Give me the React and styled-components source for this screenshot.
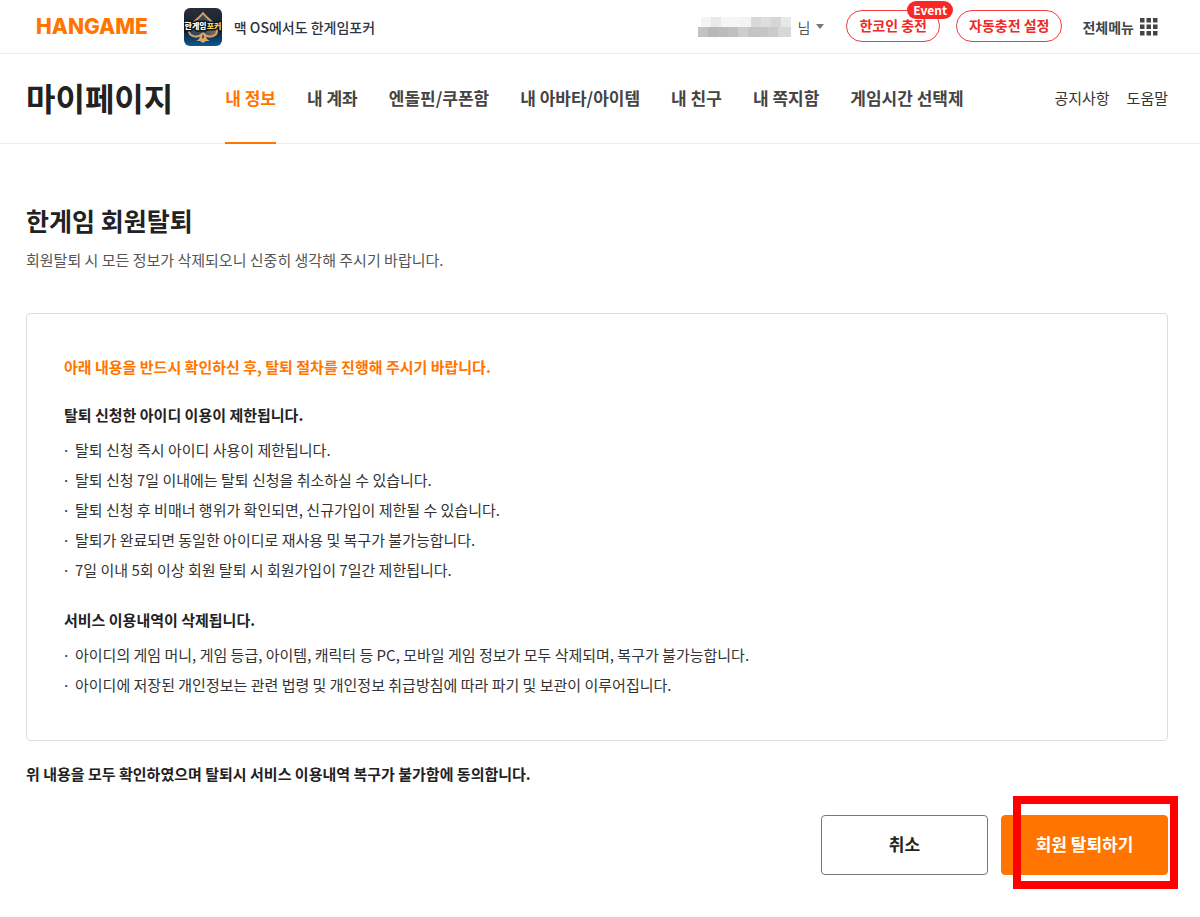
import React from "react";
import styled, { createGlobalStyle } from "styled-components";

const GlobalStyle = createGlobalStyle`
  * {
    box-sizing: border-box;
  }
  body {
    margin: 0;
    background: #fff;
    color: #222;
    font-family: "Noto Sans CJK KR", "Noto Sans", sans-serif;
    font-size: 15px;
  }
  h1, h2, h3, p, ul {
    margin: 0;
    padding: 0;
  }
  a {
    color: inherit;
    text-decoration: none;
  }
  button {
    font-family: inherit;
    cursor: pointer;
  }
`;

const TopBar = styled.header`
  display: flex;
  align-items: center;
  height: 54px;
  padding: 0 42px 0 36px;
  border-bottom: 1px solid #ececec;
`;

const Logo = styled.a`
  color: #ff7500;
  font-family: Inter, sans-serif;
  font-size: 21px;
  font-weight: 800;
  line-height: 24px;
`;

const Promo = styled.a`
  display: flex;
  align-items: center;
  gap: 12px;
  margin-left: 36px;
  color: #2d3444;
  font-size: 14px;
  font-weight: 500;
`;

const TopMenu = styled.div`
  display: flex;
  align-items: center;
  margin-left: auto;
`;

const UserButton = styled.button`
  display: flex;
  align-items: center;
  gap: 6px;
  padding: 0;
  border: 0;
  background: none;
  color: #555;
  font-size: 14px;
`;

const PillButton = styled.button`
  position: relative;
  height: 32px;
  margin-bottom: 2px;
  margin-left: ${props => props.$gap};
  padding: 0 12px 2px;
  border: 1px solid #f03c3c;
  border-radius: 16px;
  background: #fff;
  color: #ee2a2a;
  font-size: 14px;
  font-weight: 700;
  line-height: 20px;
`;

const EventBadge = styled.span`
  position: absolute;
  top: -10px;
  right: -14px;
  padding: 0 6px;
  border-radius: 9px;
  background: #fb2828;
  color: #fff;
  font-size: 12px;
  font-weight: 700;
  line-height: 18px;
`;

const AllMenu = styled.button`
  display: flex;
  align-items: center;
  gap: 6px;
  margin-left: 20px;
  padding: 0;
  border: 0;
  background: none;
  color: #444;
  font-size: 14px;
  font-weight: 700;
`;

const MenuBar = styled.div`
  display: flex;
  align-items: center;
  height: 90px;
  padding: 0 32px 0 26px;
  border-bottom: 1px solid #ececec;
`;

const PageTitle = styled.h1`
  padding-bottom: 4px;
  font-size: 32px;
  font-weight: 700;
  line-height: 46px;
`;

const Nav = styled.nav`
  display: flex;
  align-self: stretch;
  gap: 31px;
  margin-left: 52px;
`;

const NavLink = styled.a`
  display: flex;
  align-items: center;
  margin-bottom: -1px;
  padding-bottom: 2px;
  border-bottom: 2px solid ${props => (props.$active ? "#ff7500" : "transparent")};
  color: ${props => (props.$active ? "#ff7500" : "#444")};
  font-size: 17px;
  font-weight: 700;
`;

const SubNav = styled.nav`
  display: flex;
  gap: 17px;
  margin-left: auto;
  padding-bottom: 2px;
  color: #333;
`;

const Content = styled.main`
  padding: 58px 32px 42px 26px;
`;

const Heading = styled.h2`
  font-size: 25px;
  font-weight: 700;
  line-height: 36px;
`;

const Description = styled.p`
  margin-top: 11px;
  color: #555;
  line-height: 22px;
`;

const NoticeBox = styled.section`
  margin-top: 42px;
  padding: 42px 37px 40px;
  border: 1px solid #ddd;
  border-radius: 4px;
`;

const NoticeLead = styled.p`
  color: #ff7500;
  font-weight: 700;
  line-height: 22px;
`;

const NoticeTitle = styled.h3`
  margin-top: ${props => props.$gap};
  font-size: 15px;
  font-weight: 700;
  line-height: 22px;
`;

const NoticeList = styled.ul`
  margin-top: 9px;
  list-style: none;
`;

const NoticeItem = styled.li`
  display: flex;
  color: #333;
  line-height: 30px;

  &::before {
    content: "·";
    width: 11px;
    flex: none;
    margin-left: -2px;
    margin-right: 2px;
  }
`;

const Agreement = styled.p`
  margin-top: 22px;
  font-weight: 700;
  line-height: 22px;
`;

const Actions = styled.div`
  display: flex;
  justify-content: flex-end;
  gap: 13px;
  margin-top: 30px;
`;

const ActionButton = styled.button`
  width: 167px;
  height: 60px;
  padding: 0 0 3px;
  border: 1px solid ${props => (props.$primary ? "#ff7500" : "#777")};
  border-radius: 4px;
  background: ${props => (props.$primary ? "#ff7500" : "#fff")};
  color: ${props => (props.$primary ? "#fff" : "#222")};
  font-size: 17px;
  font-weight: 700;
`;

const Highlighted = styled.div`
  position: relative;
  display: flex;

  &::after {
    content: "";
    position: absolute;
    top: -19px;
    right: -10px;
    bottom: -14px;
    left: 12px;
    border: 8px solid #f00;
    pointer-events: none;
  }
`;

const navItems = [
  "내 정보",
  "내 계좌",
  "엔돌핀/쿠폰함",
  "내 아바타/아이템",
  "내 친구",
  "내 쪽지함",
  "게임시간 선택제"
];

const notices = [
  {
    title: "탈퇴 신청한 아이디 이용이 제한됩니다.",
    gap: "26px",
    items: [
      "탈퇴 신청 즉시 아이디 사용이 제한됩니다.",
      "탈퇴 신청 7일 이내에는 탈퇴 신청을 취소하실 수 있습니다.",
      "탈퇴 신청 후 비매너 행위가 확인되면, 신규가입이 제한될 수 있습니다.",
      "탈퇴가 완료되면 동일한 아이디로 재사용 및 복구가 불가능합니다.",
      "7일 이내 5회 이상 회원 탈퇴 시 회원가입이 7일간 제한됩니다."
    ]
  },
  {
    title: "서비스 이용내역이 삭제됩니다.",
    gap: "24px",
    items: [
      "아이디의 게임 머니, 게임 등급, 아이템, 캐릭터 등 PC, 모바일 게임 정보가 모두 삭제되며, 복구가 불가능합니다.",
      "아이디에 저장된 개인정보는 관련 법령 및 개인정보 취급방침에 따라 파기 및 보관이 이루어집니다."
    ]
  }
];

const PokerIcon = () => (
  <svg width="38" height="38" viewBox="0 0 38 38" aria-hidden="true">
    <defs>
      <linearGradient id="pokerBg" x1="0" y1="0" x2="0" y2="1">
        <stop offset="0" stopColor="#2a2d38" />
        <stop offset="0.6" stopColor="#13202f" />
        <stop offset="1" stopColor="#075a96" />
      </linearGradient>
      <linearGradient id="pokerSpade" x1="0" y1="0" x2="1" y2="0">
        <stop offset="0" stopColor="#34495c" />
        <stop offset="0.5" stopColor="#3a4453" />
        <stop offset="1" stopColor="#8d7459" />
      </linearGradient>
    </defs>
    <rect width="38" height="38" rx="6" fill="url(#pokerBg)" />
    <path
      d="M19 5C15 11 5 16 5 23c0 5 8 8 13 3h2c5 5 13 2 13-3C33 16 23 11 19 5Z"
      fill="url(#pokerSpade)"
      stroke="#cfa06c"
      strokeWidth="2"
      strokeLinejoin="round"
    />
    <path d="M19 24l3 3c0 3 1 5 4 6h-4l-3 2-3-2h-4c3-1 4-3 4-6Z" fill="#d9a66e" />
    <path d="M19 26l1 3-1 2-1-2Z" fill="#4b3421" />
    <text
      x="19"
      y="21"
      textAnchor="middle"
      fontSize="8"
      fontWeight="900"
      fill="#fff"
      stroke="#10151e"
      strokeWidth="3"
      strokeLinejoin="round"
      paintOrder="stroke"
    >
      한게임<tspan fill="#f4d34c">포커</tspan>
    </text>
  </svg>
);

// pixelated strip in place of the account name
const maskTop = ["#f4f4f4", "#e9e9e9", "#f6f6f6", "#f5f5f5", "#f3f3f3", "#d8d8d8", "#dedede", "#d6d6d6", "#e8e8e8"];
const maskBottom = ["#c2c2c2", "#b8b8b8", "#bbbbbb", "#c0c0c0", "#cdcdcd", "#c4c4c4", "#c6c6c6", "#cbcbcb", "#d8d8d8"];

const MaskedName = () => (
  <svg width="94" height="20" viewBox="0 0 94 20" aria-hidden="true">
    {maskTop.map((fill, i) => (
      <rect key={i} x={3 + i * 10} y="0" width="10" height="10" fill={fill} />
    ))}
    {maskBottom.map((fill, i) => (
      <rect key={i} x={i * 10} y="10" width={i === 8 ? 13 : 10} height="10" fill={fill} />
    ))}
  </svg>
);

const CaretIcon = () => (
  <svg width="8" height="5" viewBox="0 0 8 5" aria-hidden="true">
    <path d="M0 0h8L4 5Z" fill="#777" />
  </svg>
);

const GridIcon = () => (
  <svg width="18" height="18" viewBox="0 0 18 18" fill="#444" aria-hidden="true">
    {[0, 6.5, 13].map(y =>
      [0, 6.5, 13].map(x => (
        <rect key={`${x}-${y}`} x={x} y={y} width="4.5" height="4.5" />
      ))
    )}
  </svg>
);

const App = () => (
  <>
    <GlobalStyle />
    <TopBar>
      <Logo href="#">HANGAME</Logo>
      <Promo href="#">
        <PokerIcon />
        맥 OS에서도 한게임포커
      </Promo>
      <TopMenu>
        <UserButton>
          <MaskedName />
          님
          <CaretIcon />
        </UserButton>
        <PillButton $gap="22px">
          한코인 충전
          <EventBadge>Event</EventBadge>
        </PillButton>
        <PillButton $gap="16px">자동충전 설정</PillButton>
        <AllMenu>
          전체메뉴
          <GridIcon />
        </AllMenu>
      </TopMenu>
    </TopBar>
    <MenuBar>
      <PageTitle>마이페이지</PageTitle>
      <Nav>
        {navItems.map((item, i) => (
          <NavLink href="#" key={item} $active={i === 0}>
            {item}
          </NavLink>
        ))}
      </Nav>
      <SubNav>
        <a href="#">공지사항</a>
        <a href="#">도움말</a>
      </SubNav>
    </MenuBar>
    <Content>
      <Heading>한게임 회원탈퇴</Heading>
      <Description>
        회원탈퇴 시 모든 정보가 삭제되오니 신중히 생각해 주시기 바랍니다.
      </Description>
      <NoticeBox>
        <NoticeLead>
          아래 내용을 반드시 확인하신 후, 탈퇴 절차를 진행해 주시기 바랍니다.
        </NoticeLead>
        {notices.map(({ title, gap, items }) => (
          <React.Fragment key={title}>
            <NoticeTitle $gap={gap}>{title}</NoticeTitle>
            <NoticeList>
              {items.map(item => (
                <NoticeItem key={item}>{item}</NoticeItem>
              ))}
            </NoticeList>
          </React.Fragment>
        ))}
      </NoticeBox>
      <Agreement>
        위 내용을 모두 확인하였으며 탈퇴시 서비스 이용내역 복구가 불가함에 동의합니다.
      </Agreement>
      <Actions>
        <ActionButton>취소</ActionButton>
        <Highlighted>
          <ActionButton $primary>회원 탈퇴하기</ActionButton>
        </Highlighted>
      </Actions>
    </Content>
  </>
);

export default App;
